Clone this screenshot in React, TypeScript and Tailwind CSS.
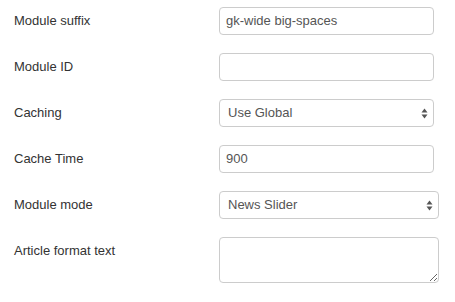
import React from "react";

const Arrows = () => (
  <svg width="7" height="11" viewBox="0 0 7 11">
    <path d="M3.5 0.5 L6.5 4.5 L0.5 4.5 Z" fill="#555" />
    <path d="M3.5 10.5 L6.5 6.5 L0.5 6.5 Z" fill="#555" />
  </svg>
);

function Row({ label, children }: { label: string; children: React.ReactNode }) {
  return (
    <div className="flex items-start">
      <div className="w-[219px] shrink-0 pl-[14px] leading-[28px] text-[13px] text-[#333]">{label}</div>
      {children}
    </div>
  );
}

export default function App() {
  return (
    <div
      className="w-[455px] h-[302px] bg-white pt-[7px] flex flex-col gap-[18px] overflow-hidden"
      style={{ fontFamily: '"Liberation Sans", Arial, sans-serif' }}
    >
      <Row label="Module suffix">
        <div className="w-[215px] h-[28px] border border-[#ccc] rounded-[4px] px-[6px] flex items-center text-[13px] text-[#555]">
          gk-wide big-spaces
        </div>
      </Row>
      <Row label="Module ID">
        <div className="w-[215px] h-[28px] border border-[#ccc] rounded-[4px]" />
      </Row>
      <Row label="Caching">
        <div className="w-[215px] h-[28px] border border-[#ccc] rounded-[4px] pl-[8px] pr-[5px] flex items-center justify-between text-[13px] text-[#555]">
          <span>Use Global</span>
          <Arrows />
        </div>
      </Row>
      <Row label="Cache Time">
        <div className="w-[215px] h-[28px] border border-[#ccc] rounded-[4px] px-[6px] flex items-center text-[13px] text-[#555]">
          900
        </div>
      </Row>
      <Row label="Module mode">
        <div className="w-[220px] h-[28px] border border-[#ccc] rounded-[4px] pl-[8px] pr-[5px] flex items-center justify-between text-[13px] text-[#555]">
          <span>News Slider</span>
          <Arrows />
        </div>
      </Row>
      <Row label="Article format text">
        <textarea
          className="w-[220px] h-[46px] border border-[#ccc] rounded-[4px] outline-none"
          readOnly
        />
      </Row>
    </div>
  );
}
